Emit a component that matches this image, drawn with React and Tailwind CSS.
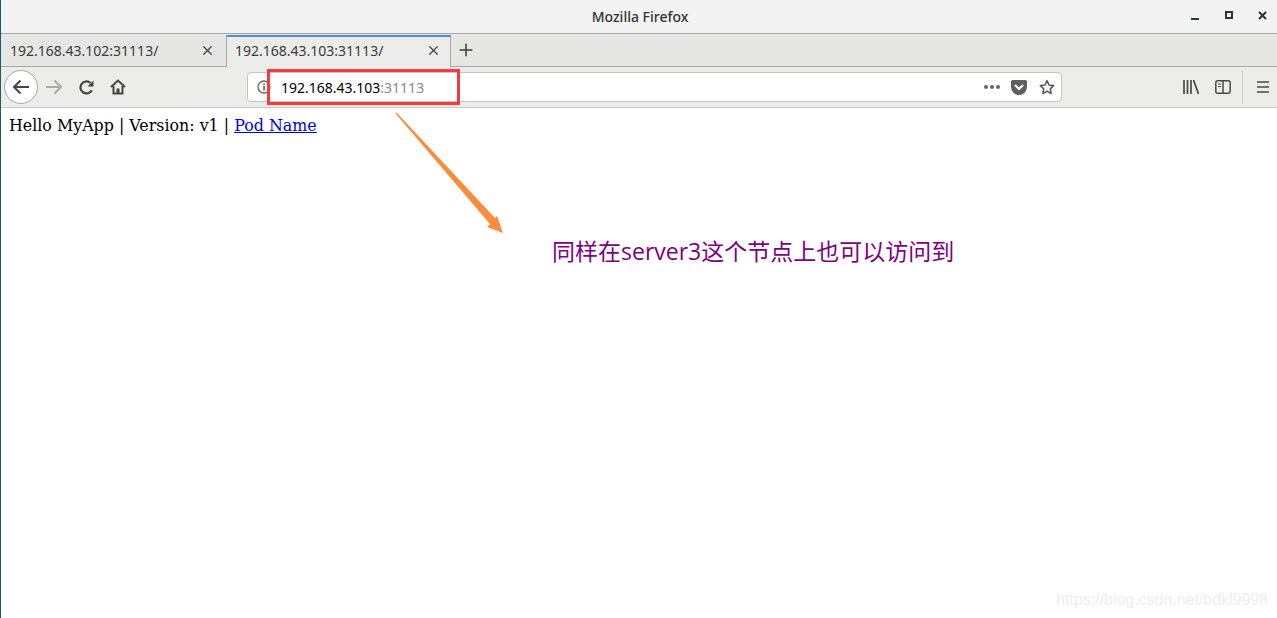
import { Plus, X } from "lucide-react";

const uiFont = "font-['Noto_Sans','Liberation_Sans',sans-serif]";

function Tab({ title, active }) {
  return (
    <div
      className={
        active
          ? "mt-px flex h-[32px] w-[225px] items-center justify-between border-x border-[#a8a8a8] border-t-2 border-t-[#4a90d9] bg-[#ececeb] pb-[3px] pl-[8px] pr-[9px]"
          : "flex h-[32px] w-[225px] items-center justify-between pl-[9px] pr-[11px]"
      }
    >
      <span className="text-[14px] text-[#3a3a3a]">{title}</span>
      <X size={15} strokeWidth={2} className="text-[#444]" />
    </div>
  );
}

export default function App() {
  return (
    <div className={`relative h-[618px] w-[1277px] overflow-hidden border-l border-[#1c5c70] bg-white ${uiFont}`}>
      {/* window title */}
      <div className="relative flex h-[34px] items-center justify-center border-b border-[#a6a6a6] bg-[#f3f3f3]">
        <span className="pl-[2px] text-[14px] font-medium text-[#2e3436]">Mozilla Firefox</span>
        <div className="absolute right-[10px] top-0 flex h-[30px] items-center text-[#2e3436]">
          <div className="h-[2px] w-[8px] translate-y-[4px] bg-[#2e3436]" />
          <div className="ml-[26px] h-[8px] w-[8px] border-2 border-[#2e3436]" />
          <svg width="9" height="9" viewBox="0 0 9 9" className="ml-[25px]">
            <path d="M1 1l7 7M8 1 1 8" fill="none" stroke="currentColor" strokeWidth="2" />
          </svg>
        </div>
      </div>

      {/* tabs */}
      <div className="flex h-[33px] items-start border-b border-[#a8a8a8] bg-[#e6e6e5]">
        <Tab title="192.168.43.102:31113/" />
        <Tab title="192.168.43.103:31113/" active />
        <div className="flex h-[32px] w-[30px] items-center justify-center">
          <Plus size={20} strokeWidth={1.8} className="text-[#3a3a3a]" />
        </div>
      </div>

      {/* toolbar */}
      <div className="flex h-[41px] items-center border-b border-[#c8c8c8] bg-[#ececeb]">
        <div className="ml-[3px] flex h-[34px] w-[34px] items-center justify-center rounded-full border border-[#a8a8a8] bg-white">
          <svg width="18" height="16" viewBox="0 0 18 16" className="text-[#444]">
            <path d="M17 8H2M8.500 1.500 2 8l6.500 6.500" fill="none" stroke="currentColor" strokeWidth="2" />
          </svg>
        </div>
        <svg width="18" height="16" viewBox="0 0 18 16" className="ml-[7px] text-[#aaaaaa]">
          <path d="M1 8h15M9.500 1.500 16 8l-6.500 6.500" fill="none" stroke="currentColor" strokeWidth="2" />
        </svg>
        <svg width="15" height="15" viewBox="0 0 15 15" className="ml-[16px] text-[#444]">
          <path d="M12.800 10.200A6 6 0 1 1 11.500 3" fill="none" stroke="currentColor" strokeWidth="2.200" />
          <path d="M14.500 0.500v6h-6z" fill="currentColor" />
        </svg>
        <svg width="16" height="16" viewBox="0 0 16 16" className="ml-[16px] text-[#444]">
          <path d="M1 8 8 1.500 15 8" fill="none" stroke="currentColor" strokeWidth="2" />
          <path d="M3.500 7v7.500h9V7" fill="none" stroke="currentColor" strokeWidth="2" />
          <rect x="6.500" y="9.500" width="3" height="5" fill="currentColor" />
        </svg>

        {/* url bar */}
        <div className="ml-[121px] flex h-[30px] w-[815px] items-center rounded-[4px] border border-[#c4c4c4] bg-white">
          <svg width="14" height="14" viewBox="0 0 14 14" className="ml-[9px] text-[#666]">
            <circle cx="7" cy="7" r="6" fill="none" stroke="currentColor" strokeWidth="1.3" />
            <rect x="6.200" y="6" width="1.700" height="4.500" fill="currentColor" />
            <rect x="6.200" y="3.400" width="1.700" height="1.700" fill="currentColor" />
          </svg>
          <span className="ml-[10px] text-[14px] text-black">
            192.168.43.103<span className="text-[#8a8a8a]">:31113</span>
          </span>
          <div className="ml-auto flex items-center text-[#5f5f5f]">
            <div className="flex gap-[2px]">
              <div className="h-[4px] w-[4px] rounded-full bg-[#666]" />
              <div className="h-[4px] w-[4px] rounded-full bg-[#666]" />
              <div className="h-[4px] w-[4px] rounded-full bg-[#666]" />
            </div>
            <svg width="16" height="15" viewBox="0 0 16 15" className="ml-[11px]">
              <path d="M1.500 0h13A1.500 1.500 0 0 1 16 1.500V7a8 8 0 0 1-16 0V1.500A1.500 1.500 0 0 1 1.500 0z" fill="#5f5f5f" />
              <path d="M4.500 5.500 8 9l3.500-3.500" fill="none" stroke="#fff" strokeWidth="2" strokeLinecap="round" />
            </svg>
            <svg width="16" height="16" viewBox="0 0 24 24" className="ml-[12px] mr-[6px]">
              <path d="M12 2.500l3 6.500 7 .9-5.100 4.800 1.300 7L12 18.300l-6.200 3.400 1.300-7L2 9.900l7-.9z" fill="none" stroke="currentColor" strokeWidth="2.400" strokeLinejoin="round" />
            </svg>
          </div>
        </div>

        {/* right side icons */}
        <div className="ml-[121px] flex items-center text-[#4a4a4a]">
          <svg width="16" height="14" viewBox="0 0 16 14">
            <path d="M1 0v14M4.500 0v14M8 0v14M10.500 0l5 14" fill="none" stroke="currentColor" strokeWidth="1.700" />
          </svg>
          <svg width="16" height="14" viewBox="0 0 16 14" className="ml-[16px]">
            <rect x="0.800" y="0.800" width="14.400" height="12.400" rx="2" fill="none" stroke="currentColor" strokeWidth="1.500" />
            <path d="M8 1v12" stroke="currentColor" strokeWidth="1.500" />
            <path d="M3 4h3M3 6.500h3" stroke="currentColor" strokeWidth="1.200" />
          </svg>
          <div className="ml-[11px] h-[34px] w-px bg-[#cfcfcf]" />
          <svg width="14" height="12" viewBox="0 0 14 12" className="ml-[13px]">
            <path d="M1 1h12M1 6h12M1 11h12" stroke="currentColor" strokeWidth="1.700" />
          </svg>
        </div>
      </div>

      {/* page content */}
      <div className="px-[8px] pt-[8px] font-['DejaVu_Serif',serif] text-[15.870px] leading-[19px] text-black">
        Hello MyApp | Version: v1 | <a href="#" className="text-[#0000ee] underline">Pod Name</a>
      </div>

      {/* red highlight over the url */}
      <div className="absolute left-[266px] top-[69px] h-[36px] w-[193px] border-[3px] border-[#f73b3b]" />

      {/* orange arrow */}
      <svg width="120" height="130" viewBox="0 0 120 130" className="absolute left-[389px] top-[110px]">
        <path d="M5.500 3.500 L6.500 2.500 L105 108 L107 106 L113 123 L97 117 L100 114 Z" fill="#fb8c3c" />
      </svg>

      {/* annotation */}
      <div className="absolute left-[551px] top-[236px] font-['Open_Sans','Noto_Sans_CJK_SC',sans-serif] text-[23px] leading-[31px] whitespace-nowrap text-[#800080]">
        同样在server3这个节点上也可以访问到
      </div>

      {/* watermark */}
      <div className="absolute right-[9px] top-[590px] font-['Liberation_Sans',sans-serif] text-[16px] leading-[19px] tracking-[-0.030px] text-[#eeeeee]">
        https://blog.csdn.net/bdkl9998
      </div>
    </div>
  );
}
